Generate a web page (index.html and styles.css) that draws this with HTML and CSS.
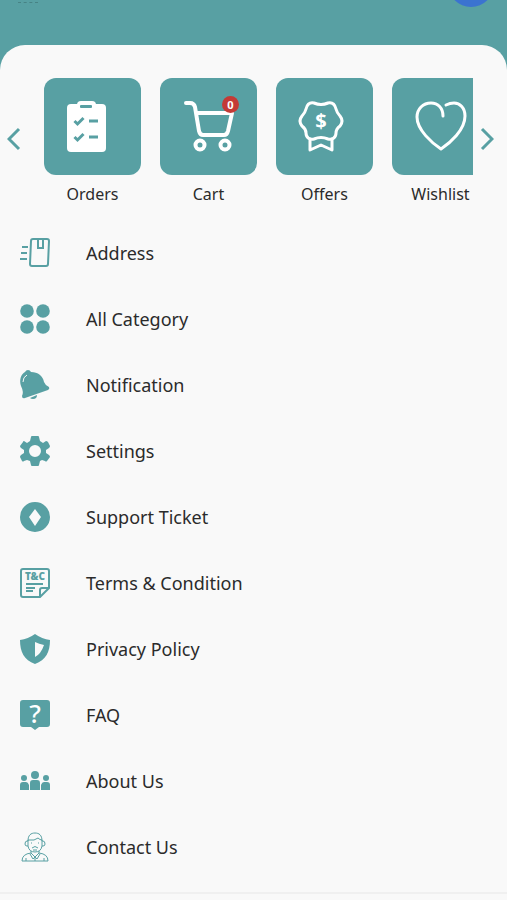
FILE: index.html
```html
<!DOCTYPE html>
<html lang="en">
<head>
    <meta charset="UTF-8">
    <meta name="viewport" content="width=device-width, initial-scale=1.0">
    <title>More</title>
    <link rel="stylesheet" href="styles.css">
</head>
<body>

    <header class="top-bar">
        <span class="greeting"></span>
        <span class="avatar"></span>
    </header>

    <main class="panel">
        <section class="carousel">
            <button type="button" class="arrow" aria-label="Previous">
                <svg width="14" height="24" viewBox="0 0 14 24"><path d="M12 2 L2 12 L12 22"/></svg>
            </button>

            <ul class="tiles">
                <li>
                    <a href="#orders">
                        <span class="tile">
                            <svg viewBox="0 0 97 97">
                                <rect class="solid" x="23" y="26" width="39" height="48" rx="4"/>
                                <rect class="solid" x="33" y="23" width="19" height="10" rx="4"/>
                                <rect class="cut" x="36" y="27" width="12" height="3" rx="1"/>
                                <path class="cut-line" d="M30.500 43 L33.500 46 L39.500 40 M45 43 H54 M30.500 59 L33.500 62 L39.500 56 M45 59 H54"/>
                            </svg>
                        </span>
                        <span class="tile-label">Orders</span>
                    </a>
                </li>
                <li>
                    <a href="#cart">
                        <span class="tile">
                            <svg viewBox="0 0 97 97">
                                <path class="line thick" d="M26 25 H30 Q34 25 35 29 L39 53 Q40 57 43 57 H64 Q67 57 68 53 L72 35 H37"/>
                                <circle class="line thick" cx="40" cy="67" r="4.500"/>
                                <circle class="line thick" cx="65" cy="67" r="4.500"/>
                            </svg>
                            <span class="badge">0</span>
                        </span>
                        <span class="tile-label">Cart</span>
                    </a>
                </li>
                <li>
                    <a href="#offers">
                        <span class="tile">
                            <svg viewBox="0 0 97 97">
                                <path class="line" d="M38 25 Q45 28 52 25 C57 24 59 27 60 31 Q61 35 64 38 Q68 43 64 48 Q60 51 60 55 C60 60 56 62 52 61 Q45 58 38 61 C34 62 30 60 30 55 Q30 51 26 48 Q22 43 26 38 Q29 35 30 31 C31 27 33 24 38 25 Z"/>
                                <path class="line" d="M34 61 V72 L45 67 L56 72 V61"/>
                                <text class="dollar" x="45" y="50">$</text>
                            </svg>
                        </span>
                        <span class="tile-label">Offers</span>
                    </a>
                </li>
                <li>
                    <a href="#wishlist">
                        <span class="tile">
                            <svg viewBox="0 0 97 97">
                                <path class="line" d="M51 38 C51 30 46 25 39 25 C31 25 25 31 25 39 C25 52 40 65 49 71 C58 65 73 52 73 38 C73 30 68 25 62 25 Q58 25 54 27"/>
                            </svg>
                        </span>
                        <span class="tile-label">Wishlist</span>
                    </a>
                </li>
            </ul>

            <button type="button" class="arrow" aria-label="Next">
                <svg width="14" height="24" viewBox="0 0 14 24"><path d="M2 2 L12 12 L2 22"/></svg>
            </button>
        </section>

        <nav>
            <ul class="menu">
                <li><a href="#address">
                    <svg viewBox="0 0 30 30">
                        <path class="stroke" d="M13 1 H27 Q29 1 29 3 L28 26 Q28 28 26 28 H12 Q10 28 10 26 L11 3 Q11 1 13 1 Z M18 1 V10 H23 V1"/>
                        <path class="stroke" d="M2 9 H8 M1 15 H7 M0 21 H7"/>
                    </svg>
                    Address</a></li>
                <li><a href="#category">
                    <svg viewBox="0 0 30 30">
                        <circle cx="7" cy="7" r="6.800"/><circle cx="23" cy="7" r="6.800"/>
                        <circle cx="7" cy="23" r="6.800"/><circle cx="23" cy="23" r="6.800"/>
                    </svg>
                    All Category</a></li>
                <li><a href="#notification">
                    <svg viewBox="0 0 30 30">
                        <path d="M5 2 Q6 0 8 0 Q10 0 11 2 C18 2 23 6 24 12 Q25 15 29 17 Q30 19 28 20 L5 28 Q2 29 2 26 Q4 22 1 16 C-1 10 1 4 5 2 Z"/>
                        <path d="M10 28 L17 25 Q17 29 13 29 Q11 29 10 28 Z"/>
                        <path class="shine" d="M3 12 Q3 7 7 5"/>
                    </svg>
                    Notification</a></li>
                <li><a href="#settings">
                    <svg viewBox="0 0 30 30">
                        <path fill-rule="evenodd" d="M12 0 H18 Q19 0 19 1 L20 5 L23 7 L26 5 Q27 5 28 6 L30 10 Q30 11 29 12 L26 14 V17 L29 19 Q30 20 30 21 L27 25 Q26 26 25 25 L22 24 L20 25 L19 29 Q19 30 18 30 H12 Q11 30 11 29 L10 25 L7 24 L4 25 Q3 26 2 25 L0 21 Q0 20 1 19 L4 17 V14 L1 12 Q0 11 0 10 L3 6 Q3 5 4 5 L7 7 L10 5 L11 1 Q11 0 12 0 Z M15 9 A6 6 0 1 0 15 21 A6 6 0 1 0 15 9 Z"/>
                    </svg>
                    Settings</a></li>
                <li><a href="#support">
                    <svg viewBox="0 0 30 30">
                        <path fill-rule="evenodd" d="M15 0 A15 15 0 1 0 15 30 A15 15 0 1 0 15 0 Z M15 7 L21 15 L15 24 L9 15 Z"/>
                    </svg>
                    Support Ticket</a></li>
                <li><a href="#terms">
                    <svg viewBox="0 0 30 30">
                        <path class="stroke" d="M3 1 H27 Q29 1 29 3 V20 L20 29 H3 Q1 29 1 27 V3 Q1 1 3 1 Z M29 20 H22 Q20 20 20 22 V28 M6 16 H23 M6 20 H15 M6 23 H13"/>
                        <text class="tc" x="15" y="12">T&amp;C</text>
                    </svg>
                    Terms &amp; Condition</a></li>
                <li><a href="#privacy">
                    <svg viewBox="0 0 30 30">
                        <path fill-rule="evenodd" d="M15 0 Q22 5 30 6 C30 18 26 26 15 30 C4 26 0 18 0 6 Q8 5 15 0 Z M15 8 V23 Q21 20 24 11 Q19 10 15 8 Z"/>
                    </svg>
                    Privacy Policy</a></li>
                <li><a href="#faq">
                    <svg viewBox="0 0 30 30">
                        <path d="M3 0 H27 Q30 0 30 3 V24 Q30 27 27 27 H19 L15 30 L11 27 H3 Q0 27 0 24 V3 Q0 0 3 0 Z"/>
                        <text class="question" x="15" y="23">?</text>
                    </svg>
                    FAQ</a></li>
                <li><a href="#about">
                    <svg viewBox="0 0 30 30">
                        <circle cx="15" cy="9" r="4"/><circle cx="4" cy="12" r="3"/><circle cx="26" cy="12" r="3"/>
                        <path d="M10 24 V17 Q10 14 13 14 H17 Q20 14 20 17 V24 Z M0 24 V19 Q0 16 3 16 H6 Q8 16 9 19 V24 Z M21 24 V19 Q22 16 24 16 H27 Q30 16 30 19 V24 Z"/>
                    </svg>
                    About Us</a></li>
                <li><a href="#contact">
                    <svg viewBox="0 0 30 30">
                        <path class="fine" d="M8 9 C8 3 11 1 15 1 C19 1 22 3 22 9 M8 9 H7 Q5 9 5 12 Q5 14 7 14 H8 V8 Q15 9 18 6 Q20 8 22 8 V14 H23 Q25 14 25 12 Q25 9 23 9 H22 M8 14 Q9 20 15 20 Q21 20 22 14 M12 16 Q15 13 18 16 M13 18 H17 M11 11 H12 M18 11 H19"/>
                        <path class="fine" d="M11 19 V21 Q2 22 2 29 H28 Q28 22 19 21 V19 M11 21 L15 25 L19 21 M10 22 L13 27 L15 25 L17 27 L20 22 M15 25 V29 M6 26 V29 M24 26 V29"/>
                    </svg>
                    Contact Us</a></li>
            </ul>
        </nav>
    </main>

</body>
</html>
```

FILE: styles.css
```css
* {
    box-sizing: border-box;
}
body {
    font-family: "Noto Sans", "Open Sans", sans-serif;
    background-color: #58a0a3;
    color: #2b2b2b;
    margin: 0;
}
ul {
    list-style: none;
    margin: 0;
    padding: 0;
}
a {
    color: inherit;
    text-decoration: none;
}

.top-bar {
    display: flex;
    justify-content: space-between;
    align-items: flex-start;
    height: 45px;
    padding: 0 13px 0 18px;
    overflow: hidden;
}
.greeting {
    width: 20px;
    margin-top: 2px;
    border-top: 1px dashed #478385;
}
.avatar {
    width: 46px;
    height: 46px;
    margin-top: -39px;
    border-radius: 50%;
    background-color: #3b73d0;
}

.panel {
    background-color: #f9f9f9;
    border-radius: 25px 25px 0 0;
    padding-top: 23px;
    min-height: calc(100vh - 45px);
}

.carousel {
    display: flex;
    align-items: center;
}
.arrow {
    flex: none;
    width: 34px;
    height: 48px;
    padding: 0 7px;
    border: none;
    background: none;
    cursor: pointer;
}
.arrow svg {
    display: block;
    fill: none;
    stroke: #58a0a3;
    stroke-width: 3;
}
.tiles {
    flex: 1;
    display: flex;
    gap: 19px;
    padding: 10px 0 4px 10px;
    overflow: hidden;
}
.tiles li {
    flex: none;
}
.tile {
    display: block;
    position: relative;
    width: 97px;
    height: 97px;
    border-radius: 12px;
    background-color: #58a0a3;
}
.tile svg {
    display: block;
}
.tile-label {
    display: block;
    margin-top: 7px;
    font-size: 16px;
    line-height: 24px;
    text-align: center;
}
.badge {
    position: absolute;
    top: 18px;
    left: 62px;
    width: 17px;
    height: 17px;
    border-radius: 50%;
    background-color: #c43a36;
    color: #fff;
    font-size: 11px;
    font-weight: bold;
    line-height: 17px;
    text-align: center;
}

.solid {
    fill: #fff;
}
.cut {
    fill: #58a0a3;
}
.cut-line {
    fill: none;
    stroke: #58a0a3;
    stroke-width: 3;
}
.line {
    fill: none;
    stroke: #fff;
    stroke-width: 3;
    stroke-linecap: round;
    stroke-linejoin: round;
}
.thick {
    stroke-width: 4;
}
.dollar {
    fill: #fff;
    font-size: 20px;
    font-weight: bold;
    text-anchor: middle;
}

.menu {
    margin-top: 10px;
    padding-bottom: 12px;
    border-bottom: 2px solid #f0f0f0;
}
.menu a {
    display: flex;
    align-items: center;
    gap: 36px;
    height: 66px;
    padding: 0 20px;
    font-size: 18px;
}
.menu svg {
    flex: none;
    width: 30px;
    height: 30px;
    fill: #58a0a3;
    overflow: visible;
}
.menu .stroke {
    fill: none;
    stroke: #58a0a3;
    stroke-width: 2;
}
.menu .fine {
    fill: none;
    stroke: #58a0a3;
    stroke-width: 1;
}
.menu .shine {
    fill: none;
    stroke: #f9f9f9;
    stroke-width: 1;
}
.tc {
    font-size: 10px;
    font-weight: 900;
    text-anchor: middle;
}
.menu .question {
    fill: #fff;
    font-size: 26px;
    font-weight: 500;
    text-anchor: middle;
}
```
